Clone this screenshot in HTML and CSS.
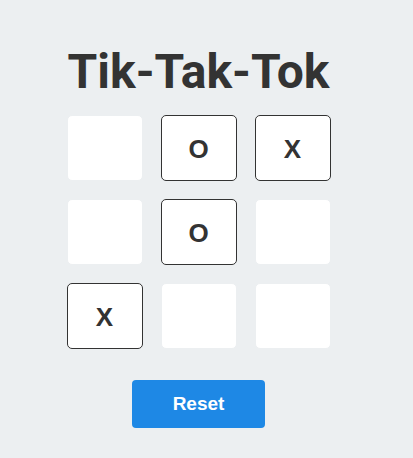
FILE: index.html
```html
<!DOCTYPE html>
<html>
<head>
<meta charset="utf-8">
<link rel="stylesheet" href="styles.css">
</head>
<body>
<main class="game">
  <h1 class="title">Tik-Tak-Tok</h1>
  <div class="board">
    <div class="cell"></div>
    <div class="cell filled">O</div>
    <div class="cell filled">X</div>
    <div class="cell"></div>
    <div class="cell filled">O</div>
    <div class="cell"></div>
    <div class="cell filled">X</div>
    <div class="cell"></div>
    <div class="cell"></div>
  </div>
  <button class="reset">Reset</button>
</main>
</body>
</html>
```
FILE: styles.css
```css
html, body {
  margin: 0;
  padding: 0;
  background: #eceff1;
  height: 100%;
}
body {
  font-family: Roboto, "Liberation Sans", sans-serif;
  color: #333333;
  padding-right: 16px;
  box-sizing: border-box;
}
.game {
  display: flex;
  flex-direction: column;
  align-items: center;
  padding-top: 44px;
}
.title {
  margin: 0 0 15px 0;
  font-size: 48px;
  line-height: 56px;
  font-weight: 700;
  color: #333333;
}
.board {
  display: grid;
  grid-template-columns: repeat(3, 76px);
  grid-auto-rows: 66px;
  gap: 18px;
}
.cell {
  box-sizing: border-box;
  background: #ffffff;
  border: 1px solid #eceff1;
  border-radius: 5px;
  padding-top: 3px;
  display: flex;
  align-items: center;
  justify-content: center;
  font-family: "Liberation Sans", Arial, sans-serif;
  font-size: 26px;
  font-weight: 700;
  color: #333333;
}
.cell.filled {
  border-color: #333333;
}
.reset {
  margin-top: 31px;
  width: 133px;
  height: 48px;
  border: none;
  border-radius: 4px;
  background: #1e88e5;
  color: #ffffff;
  font-family: "Liberation Sans", Arial, sans-serif;
  font-size: 19px;
  font-weight: 700;
  cursor: pointer;
}
```
